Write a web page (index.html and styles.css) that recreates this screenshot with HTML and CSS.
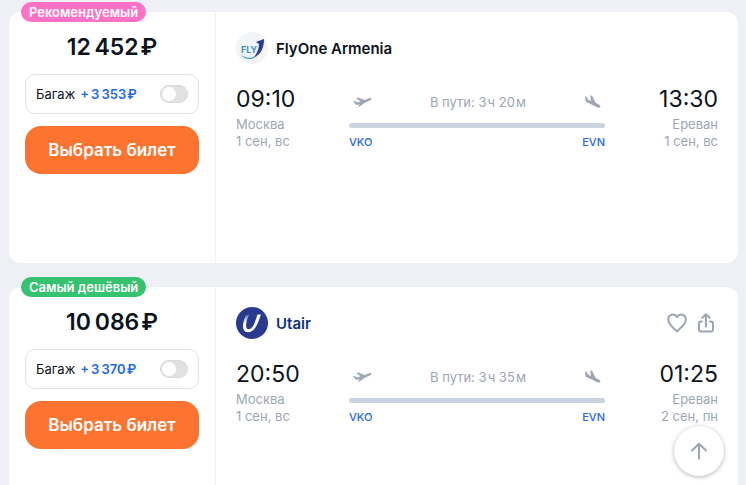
FILE: index.html
```html
<!DOCTYPE html>
<html lang="ru">
<head>
    <meta charset="UTF-8">
    <meta name="viewport" content="width=device-width, initial-scale=1.0">
    <title>Москва — Ереван</title>
    <link rel="stylesheet" href="styles.css">
</head>
<body>
    <svg class="sprite" width="0" height="0" aria-hidden="true">
        <symbol id="takeoff" viewBox="0 0 20 12">
            <path d="M1.2 5.400 L2.800 5 L5.200 6.400 L8.600 5.300 L4.200 2.200 L6.400 1.500 L12.600 3.900 L16.600 2.400 C18.200 1.800 19.400 2 19.500 2.700 C19.600 3.500 18.500 4.200 17.300 4.700 L12.800 6.700 L8 10.200 L5.600 11 L7.800 8.300 L4.400 9 Z"/>
        </symbol>
        <symbol id="landing" viewBox="0 0 17 15">
            <path d="M1 1.300 L2.400 1.800 L4 4.600 L7 6 L6.200 .3 L8.200 .9 L11.600 7.800 L14.800 9.600 C16.100 10.400 16.700 11.500 16.200 12.300 C15.700 13 14.600 12.800 13.400 12.300 L3.400 7.600 C2 6.900 1.400 6.200 1.300 5.100 Z"/>
        </symbol>
    </svg>

    <main class="tickets">
        <article class="ticket">
            <span class="badge badge-pink">Рекомендуемый</span>
            <div class="offer">
                <div class="price">12&#8201;452&#8202;₽</div>
                <label class="baggage">
                    <span class="baggage-text">Багаж <span class="baggage-price">+&#8201;3&#8201;353&#8202;₽</span></span>
                    <input type="checkbox" class="toggle">
                </label>
                <button type="button" class="select-button">Выбрать билет</button>
            </div>
            <div class="flight">
                <div class="airline">
                    <svg class="airline-logo" viewBox="0 0 32 32" aria-hidden="true">
                        <circle cx="16" cy="16" r="16" fill="#f3f4f7"/>
                        <text class="logo-text" x="5" y="21">FLY</text>
                        <path d="M20 10 L28 7 C28 16 25 23 17 26 C21 22 23 17 23 12 Z" fill="#2b3b91"/>
                        <path d="M4.500 22 C9 27 18 27 22 22 C18 29 8 28.500 4.500 22 Z" fill="#4a9bd0"/>
                    </svg>
                    <span class="airline-name">FlyOne Armenia</span>
                </div>
                <div class="route">
                    <div class="point">
                        <div class="time">09:10</div>
                        <div>Москва</div>
                        <div>1 сен, вс</div>
                    </div>
                    <div class="path">
                        <div class="path-top">
                            <svg class="takeoff-icon" aria-hidden="true"><use href="#takeoff"/></svg>
                            <span>В пути: 3&#8202;ч 20&#8202;м</span>
                            <svg class="landing-icon" aria-hidden="true"><use href="#landing"/></svg>
                        </div>
                        <div class="path-line"></div>
                        <div class="airports"><span>VKO</span><span>EVN</span></div>
                    </div>
                    <div class="point point-end">
                        <div class="time">13:30</div>
                        <div>Ереван</div>
                        <div>1 сен, вс</div>
                    </div>
                </div>
            </div>
        </article>

        <article class="ticket">
            <span class="badge badge-green">Самый дешёвый</span>
            <div class="offer">
                <div class="price">10&#8201;086&#8202;₽</div>
                <label class="baggage">
                    <span class="baggage-text">Багаж <span class="baggage-price">+&#8201;3&#8201;370&#8202;₽</span></span>
                    <input type="checkbox" class="toggle">
                </label>
                <button type="button" class="select-button">Выбрать билет</button>
            </div>
            <div class="flight">
                <div class="airline">
                    <svg class="airline-logo" viewBox="0 0 32 32" aria-hidden="true">
                        <defs>
                            <linearGradient id="fade" x1="0" y1="0" x2="0" y2="1">
                                <stop offset="0" stop-color="#fff" stop-opacity=".3"/>
                                <stop offset=".5" stop-color="#fff"/>
                            </linearGradient>
                        </defs>
                        <circle cx="16" cy="16" r="16" fill="#2a3a8f"/>
                        <path d="M9.500 9 L13 7.500 C10.800 12.500 9.700 17 10.200 20 C10.800 23.500 14.500 23 16.500 19.500 L14.500 24.500 C11 26 7.400 24.500 7 20.500 C6.700 17 8 12.500 9.500 9 Z" fill="url(#fade)"/>
                        <path d="M21.500 7.500 H25 C23 13 21.500 18 18.500 21.800 C16 25 12 26 9.500 24.500 L10.600 21.600 C12.500 23.200 15 22.300 16.500 20 C18.500 17 20 12 21.500 7.500 Z" fill="#fff"/>
                    </svg>
                    <span class="airline-name airline-utair">Utair</span>
                    <div class="actions">
                        <button type="button" class="icon-button" aria-label="В избранное">
                            <svg width="20" height="20" viewBox="0 0 20 20"><path d="M10 18.500 C7 15.500 1.200 11.500 1.200 6.500 C1.200 1.300 7.600 -.2 10 4 C12.400 -.2 18.800 1.300 18.800 6.500 C18.800 11.500 13 15.500 10 18.500 Z"/></svg>
                        </button>
                        <button type="button" class="icon-button" aria-label="Поделиться">
                            <svg width="20" height="20" viewBox="0 0 20 20"><path d="M6 8.500 H5 Q3 8.500 3 10.500 V16.500 Q3 18.500 5 18.500 H15 Q17 18.500 17 16.500 V10.500 Q17 8.500 15 8.500 H14 M10 13.500 V1.500 M6.300 4.800 L10 1.200 L13.700 4.800"/></svg>
                        </button>
                    </div>
                </div>
                <div class="route">
                    <div class="point">
                        <div class="time">20:50</div>
                        <div>Москва</div>
                        <div>1 сен, вс</div>
                    </div>
                    <div class="path">
                        <div class="path-top">
                            <svg class="takeoff-icon" aria-hidden="true"><use href="#takeoff"/></svg>
                            <span>В пути: 3&#8202;ч 35&#8202;м</span>
                            <svg class="landing-icon" aria-hidden="true"><use href="#landing"/></svg>
                        </div>
                        <div class="path-line"></div>
                        <div class="airports"><span>VKO</span><span>EVN</span></div>
                    </div>
                    <div class="point point-end">
                        <div class="time">01:25</div>
                        <div>Ереван</div>
                        <div>2 сен, пн</div>
                    </div>
                </div>
            </div>
        </article>
    </main>

    <button type="button" class="scroll-top" aria-label="Наверх">
        <svg width="20" height="20" viewBox="0 0 20 20"><path d="M10 17.500 V3 M3 9.500 L10 2.800 L17 9.500"/></svg>
    </button>
</body>
</html>
```
FILE: styles.css
```css
* {
    box-sizing: border-box;
}
body {
    margin: 0;
    background: #eff0f5;
    color: #0c131d;
    font-family: Inter, "Noto Sans", sans-serif;
    font-size: 13px;
}
button {
    font-family: inherit;
    cursor: pointer;
}
.sprite {
    position: absolute;
}
.tickets {
    display: flex;
    flex-direction: column;
    gap: 24px;
    padding: 12px 8px 24px 9px;
}
.ticket {
    position: relative;
    display: flex;
    min-height: 251px;
    background: #fff;
    border-radius: 12px;
}
.badge {
    position: absolute;
    top: -10px;
    left: 12px;
    padding: 0 8px;
    border-radius: 10px;
    color: #fff;
    font-size: 13px;
    font-weight: 600;
    line-height: 20px;
}
.badge-pink {
    background: #ff71c5;
}
.badge-green {
    background: #35c36f;
}
.offer {
    display: flex;
    flex-direction: column;
    gap: 12px;
    width: 207px;
    padding: 20px 16px;
    border-right: 1px solid #eff0f5;
}
.price {
    font-size: 23px;
    font-weight: 600;
    line-height: 30px;
    text-align: center;
}
.baggage {
    display: flex;
    align-items: center;
    justify-content: space-between;
    height: 40px;
    padding: 0 10px;
    border: 1px solid #e2e3e5;
    border-radius: 10px;
    cursor: pointer;
}
.baggage-text {
    display: flex;
    gap: 5px;
}
.baggage-price {
    color: #2568e8;
    font-weight: 600;
}
.toggle {
    appearance: none;
    display: flex;
    width: 28px;
    height: 18px;
    margin: 0;
    padding: 1px;
    border: 1px solid #d9dadc;
    border-radius: 9px;
    background: #e0e1e3;
    cursor: pointer;
}
.toggle::before {
    content: "";
    width: 14px;
    height: 14px;
    border-radius: 50%;
    background: #fff;
}
.toggle:checked {
    justify-content: flex-end;
    background: #2568e8;
}
.select-button {
    height: 48px;
    padding: 0;
    border: none;
    border-radius: 16px;
    background: #fc742f;
    color: #fff;
    font-size: 17px;
    font-weight: 600;
}
.flight {
    flex: 1;
    padding: 20px;
}
.airline {
    display: flex;
    align-items: center;
    gap: 8px;
    height: 32px;
}
.airline-logo {
    width: 32px;
    height: 32px;
}
.logo-text {
    fill: #3f92cb;
    font-size: 9px;
    font-weight: 700;
}
.airline-name {
    font-size: 15px;
    font-weight: 600;
}
.airline-utair {
    color: #0b3380;
}
.actions {
    display: flex;
    gap: 9px;
    margin-left: auto;
    padding-right: 2px;
}
.icon-button {
    display: flex;
    padding: 0;
    border: none;
    background: none;
}
.icon-button svg,
.scroll-top svg {
    fill: none;
    stroke: #9ca5b5;
    stroke-width: 2;
    stroke-linecap: round;
    stroke-linejoin: round;
}
.route {
    display: flex;
    margin-top: 20px;
    color: #9ea6b5;
}
.point {
    width: 113px;
    line-height: 17px;
}
.point-end {
    text-align: right;
}
.time {
    margin-bottom: 2px;
    color: #0c131d;
    font-size: 23px;
    line-height: 30px;
}
.path {
    flex: 1;
}
.path-top {
    display: flex;
    align-items: center;
    justify-content: space-between;
    height: 36px;
    padding: 0 4px 0 3px;
}
.takeoff-icon {
    width: 20px;
    height: 12px;
    fill: #9ea6b5;
}
.landing-icon {
    width: 17px;
    height: 15px;
    fill: #9ea6b5;
}
.path-line {
    height: 5px;
    margin-top: 3px;
    border-radius: 3px;
    background: #ccd3e0;
}
.airports {
    display: flex;
    justify-content: space-between;
    margin-top: 6px;
    color: #2568e8;
    font-size: 11px;
    font-weight: 500;
    line-height: 16px;
}
.scroll-top {
    position: fixed;
    right: 22px;
    bottom: 9px;
    display: flex;
    align-items: center;
    justify-content: center;
    width: 50px;
    height: 50px;
    padding: 0;
    border: none;
    border-radius: 50%;
    background: #fff;
    box-shadow: 0 1px 4px rgba(0, 0, 0, 0.3);
}
```
